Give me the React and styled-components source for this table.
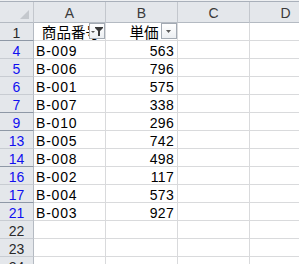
import React from 'react';
import styled, { createGlobalStyle } from 'styled-components';

const GlobalStyle = createGlobalStyle`
  html, body {
    margin: 0;
    padding: 0;
    background: #fff;
    overflow: hidden;
  }
  body {
    font-family: "Liberation Sans", "Noto Sans CJK JP", sans-serif;
  }
`;

const rows = [
  { n: 4, code: 'B-009', price: 563 },
  { n: 5, code: 'B-006', price: 796 },
  { n: 6, code: 'B-001', price: 575 },
  { n: 7, code: 'B-007', price: 338 },
  { n: 9, code: 'B-010', price: 296 },
  { n: 13, code: 'B-005', price: 742 },
  { n: 14, code: 'B-008', price: 498 },
  { n: 16, code: 'B-002', price: 117 },
  { n: 17, code: 'B-004', price: 573 },
  { n: 21, code: 'B-003', price: 927 },
];

const Sheet = styled.div`
  width: 299px;
  height: 264px;
  overflow: hidden;
  border-top: 1px solid #eef0f2;
  box-sizing: border-box;
`;

const Grid = styled.div`
  display: grid;
  grid-template-columns: 34px 72px 72px 72px 72px;
  border-top: 1px solid #a9b0ba;
  width: 322px;
`;

const Corner = styled.div`
  position: relative;
  height: 21px;
  box-sizing: border-box;
  background: #e4e7eb;
  border-right: 1px solid #c3c7cd;
  border-bottom: 1px solid #b4bac2;
  &::after {
    content: '';
    position: absolute;
    right: 4px;
    bottom: 3px;
    width: 0;
    height: 0;
    border-left: 9px solid transparent;
    border-bottom: 9px solid #c4c8cd;
  }
`;

const ColHead = styled.div`
  height: 21px;
  box-sizing: border-box;
  padding-top: 4px;
  line-height: 14px;
  font-size: 14px;
  text-align: center;
  color: #3a3a3a;
  background: #e4e7eb;
  border-right: 1px solid #c3c7cd;
  border-bottom: 1px solid #b4bac2;
`;

const RowHead = styled.div`
  height: 18px;
  box-sizing: border-box;
  padding-top: 3px;
  line-height: 14px;
  font-size: 14px;
  text-align: center;
  color: ${(p) => (p.$filtered ? '#1010f0' : '#2a2a2a')};
  background: #e4e7eb;
  border-right: 1px solid #b4bac2;
  border-bottom: 1px solid ${(p) => (p.$gap ? '#8e98a6' : '#c8ccd2')};
`;

const Cell = styled.div`
  position: relative;
  height: 18px;
  box-sizing: border-box;
  padding: 3px 3px 0 2px;
  line-height: 14px;
  font-size: 14px;
  letter-spacing: ${(p) => (p.$num ? '0.3px' : '0.8px')};
  white-space: nowrap;
  overflow: hidden;
  color: #000;
  text-align: ${(p) => p.$align || 'left'};
  border-right: 1px solid #d9dadc;
  border-bottom: 1px solid #d9dadc;
`;

const HeadText = styled.span`
  display: block;
  text-align: center;
  letter-spacing: 0;
  font-size: 14.6px;
  margin-left: ${(p) => p.$shift || 0}px;
`;

const FilterButton = styled.div`
  position: absolute;
  top: 0;
  right: 0;
  width: 16px;
  height: 16px;
  box-sizing: border-box;
  border: 1px solid #a3aab3;
  background: linear-gradient(#ffffff, #eceff2);
  display: flex;
  align-items: center;
  justify-content: center;
`;

const FunnelIcon = () => (
  <svg width="14" height="14" viewBox="0 0 14 14">
    <path d="M1 7h4l-2 2z" fill="#555" />
    <path d="M5 3h8v1l-3 3v5h-2v-5l-3-3z" fill="#3a3a3a" />
  </svg>
);

const ArrowIcon = () => (
  <svg width="14" height="14" viewBox="0 0 14 14">
    <path d="M4 6h5l-2.5 3z" fill="#5a5a5a" />
  </svg>
);

const hiddenAfter = (i) => {
  const next = rows[i + 1];
  return next && next.n !== rows[i].n + 1;
};

const App = () => (
  <>
    <GlobalStyle />
    <Sheet>
      <Grid>
        <Corner />
        <ColHead>A</ColHead>
        <ColHead>B</ColHead>
        <ColHead>C</ColHead>
        <ColHead>D</ColHead>

        <RowHead $gap>1</RowHead>
        <Cell>
          <HeadText $shift={4}>商品番号</HeadText>
          <FilterButton>
            <FunnelIcon />
          </FilterButton>
        </Cell>
        <Cell>
          <HeadText $shift={6}>単価</HeadText>
          <FilterButton>
            <ArrowIcon />
          </FilterButton>
        </Cell>
        <Cell />
        <Cell />

        {rows.map((r, i) => (
          <React.Fragment key={r.n}>
            <RowHead $filtered $gap={hiddenAfter(i)}>{r.n}</RowHead>
            <Cell>{r.code}</Cell>
            <Cell $num $align="right">{r.price}</Cell>
            <Cell />
            <Cell />
          </React.Fragment>
        ))}

        {[22, 23, 24].map((n) => (
          <React.Fragment key={n}>
            <RowHead>{n}</RowHead>
            <Cell />
            <Cell />
            <Cell />
            <Cell />
          </React.Fragment>
        ))}
      </Grid>
    </Sheet>
  </>
);

export default App;
